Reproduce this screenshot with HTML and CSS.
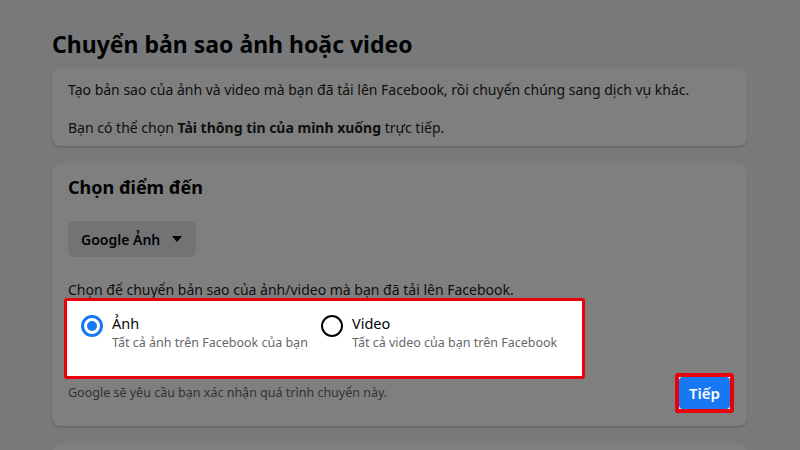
FILE: index.html
```html
<!DOCTYPE html>
<html lang="vi">
<head>
<meta charset="utf-8">
<title>Chuyển bản sao ảnh hoặc video</title>
<link rel="stylesheet" href="styles.css">
</head>
<body>
<div class="dim"></div>
<main class="page">
  <h1 class="title">Chuyển bản sao ảnh hoặc video</h1>
  <section class="card intro">
    <p>Tạo bản sao của ảnh và video mà bạn đã tải lên Facebook, rồi chuyển chúng sang dịch vụ khác.</p>
    <p>Bạn có thể chọn <b>Tải thông tin của mình xuống</b> trực tiếp.</p>
  </section>
  <section class="card dest">
    <h2 class="heading">Chọn điểm đến</h2>
    <button class="select">Google Ảnh <span class="caret"></span></button>
    <p class="hint">Chọn để chuyển bản sao của ảnh/video mà bạn đã tải lên Facebook.</p>
    <div class="choices">
      <label class="choice">
        <span class="radio on"></span>
        <span class="ctext"><span class="clabel">Ảnh</span><span class="csub">Tất cả ảnh trên Facebook của bạn</span></span>
      </label>
      <label class="choice">
        <span class="radio"></span>
        <span class="ctext"><span class="clabel">Video</span><span class="csub">Tất cả video của bạn trên Facebook</span></span>
      </label>
    </div>
    <div class="foot">
      <span class="note">Google sẽ yêu cầu bạn xác nhận quá trình chuyển này.</span>
      <span class="btnwrap"><button class="next">Tiếp</button></span>
    </div>
  </section>
  <section class="card more"></section>
</main>
</body>
</html>
```
FILE: styles.css
```css
html, body { margin: 0; padding: 0; }
body {
  background: #f0f2f5;
  font-family: "Noto Sans", "Open Sans", sans-serif;
  color: #050505;
  height: 450px;
  overflow: hidden;
}
.dim {
  position: fixed;
  inset: 0;
  background: rgba(0, 0, 0, 0.5);
  z-index: 1;
}
.page {
  width: 695px;
  padding: 30px 0 0 52px;
}
.title {
  margin: 0 0 10px;
  font-size: 23px;
  line-height: 28px;
  font-weight: 700;
}
.card {
  background: #fff;
  border-radius: 8px;
  box-shadow: 0 1px 2px rgba(0, 0, 0, 0.2);
  padding: 12px 16px;
}
.intro { padding-bottom: 8px; margin-bottom: 17px; }
.intro p {
  margin: 0;
  font-size: 14px;
  line-height: 20px;
  color: #1c1e21;
}
.intro p + p { margin-top: 18px; }
.intro b { font-weight: 700; }
.dest { padding-bottom: 13px; margin-bottom: 17px; }
.heading {
  margin: 0;
  font-size: 18px;
  line-height: 24px;
  font-weight: 700;
}
.select {
  margin-top: 22px;
  display: flex;
  align-items: center;
  gap: 12px;
  height: 36px;
  padding: 0 14px 0 13px;
  border: 0;
  border-radius: 6px;
  background: #e4e6eb;
  font-family: inherit;
  font-size: 14px;
  font-weight: 600;
  color: #050505;
}
.caret {
  width: 0;
  height: 0;
  border-left: 5.5px solid transparent;
  border-right: 5.5px solid transparent;
  border-top: 6px solid #050505;
}
.hint {
  margin: 25px 0 0;
  font-size: 14px;
  line-height: 16px;
  color: #1c1e21;
}
.choices {
  position: relative;
  z-index: 2;
  display: grid;
  grid-template-columns: 240px auto;
  margin-left: -4px;
  padding: 14px 0 0 14px;
  box-sizing: border-box;
  width: 521px;
  height: 81px;
  background: #fff;
  border: 3px solid #e8000b;
  border-radius: 3px;
}
.choice {
  display: flex;
  align-items: flex-start;
  gap: 9px;
}
.radio {
  flex: none;
  width: 22px;
  height: 22px;
  box-sizing: border-box;
  border: 2px solid #050505;
  border-radius: 50%;
  display: flex;
  align-items: center;
  justify-content: center;
}
.radio.on { border: 3px solid #1877f2; }
.radio.on::after {
  content: "";
  width: 10px;
  height: 10px;
  border-radius: 50%;
  background: #1877f2;
}
.ctext {
  display: flex;
  flex-direction: column;
  margin-top: -2px;
}
.clabel {
  font-size: 14.5px;
  line-height: 20px;
  color: #050505;
}
.csub {
  font-size: 12.5px;
  line-height: 20px;
  color: #65676b;
}
.foot {
  display: flex;
  align-items: center;
  justify-content: space-between;
  margin-top: -6px;
}
.note {
  font-size: 12.5px;
  line-height: 16px;
  color: #65676b;
}
.btnwrap {
  position: relative;
  z-index: 2;
  display: flex;
  margin-right: -3px;
  border: 4px solid #e8000b;
  border-radius: 3px;
  background: #fff;
}
.next {
  width: 51px;
  height: 32px;
  padding: 0;
  border: 0;
  border-radius: 4px;
  background: #1877f2;
  color: #fff;
  font-family: inherit;
  font-size: 15px;
  font-weight: 600;
}
.more { height: 40px; }
```
